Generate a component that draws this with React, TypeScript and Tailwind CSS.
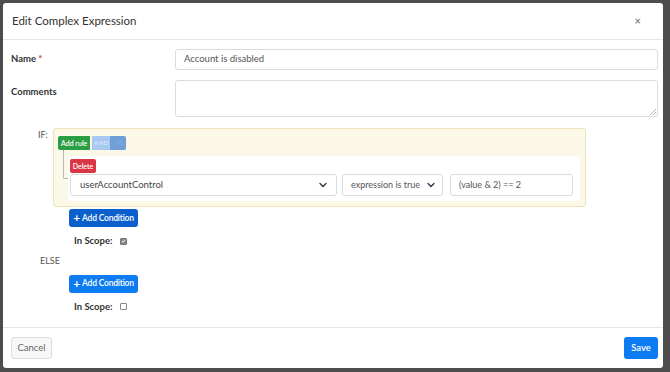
import React from "react";

function Chevron() {
  return (
    <svg width="8" height="8" viewBox="0 0 16 16" className="shrink-0">
      <path d="M2 5l6 6 6-6" fill="none" stroke="#343a40" strokeWidth="2.8" strokeLinecap="round" strokeLinejoin="round" />
    </svg>
  );
}

function AddCondition({ dark }: { dark?: boolean }) {
  return (
    <button
      className={
        "flex h-[18px] w-[69px] items-center justify-center gap-[2px] whitespace-nowrap rounded-[3px] text-[8.5px] font-semibold tracking-[-0.2px] text-white " +
        (dark ? "bg-[#0a5fcc]" : "bg-[#0d7cf2]")
      }
    >
      <span className="text-[12px] font-bold leading-none">+</span>
      <span>Add Condition</span>
    </button>
  );
}

function Scope({ checked }: { checked?: boolean }) {
  return (
    <div className="ml-[63px] flex items-center gap-[8px]">
      <span className="whitespace-nowrap text-[9.5px] font-bold text-[#333]">In Scope:</span>
      <span
        className={
          "flex h-[7px] w-[7px] items-center justify-center rounded-[1px] border " +
          (checked ? "border-[#777] bg-[#888]" : "border-[#888] bg-white")
        }
      >
        {checked && (
          <svg width="6" height="6" viewBox="0 0 8 8">
            <path d="M1.5 4l1.8 2L6.5 2" fill="none" stroke="#fff" strokeWidth="1.4" />
          </svg>
        )}
      </span>
    </div>
  );
}

export default function App() {
  return (
    <div
      className="h-[372px] w-[670px] overflow-hidden bg-[#4d4d4d] pl-[3px] pt-[3px]"
      style={{ fontFamily: "Lato, 'Noto Sans', sans-serif" }}
    >
      <div className="flex h-[365px] w-[660px] flex-col rounded-[3px] bg-white">
        {/* header */}
        <div className="flex h-[37px] shrink-0 items-center justify-between border-b border-[#e6e6e6] pl-[9px] pr-[22px]">
          <span className="text-[11.5px] text-[#333]">Edit Complex Expression</span>
          <span className="text-[11px] font-bold text-[#888]">×</span>
        </div>

        {/* body */}
        <div className="flex flex-1 flex-col pl-[8px] pr-[5px] pt-[9px]">
          <div className="flex items-center">
            <div className="w-[164px] text-[9.5px] font-bold text-[#333]">
              Name <span className="text-[#dc3545]">*</span>
            </div>
            <div className="flex h-[21px] flex-1 items-center rounded-[3px] border border-[#dcdcdc] px-[8px] text-[9.5px] text-[#555]">
              Account is disabled
            </div>
          </div>

          <div className="mt-[10px] flex items-start">
            <div className="w-[164px] pt-[5px] text-[9.5px] font-bold text-[#333]">Comments</div>
            <div className="relative h-[37px] flex-1 rounded-[3px] border border-[#dcdcdc]">
              <svg className="absolute bottom-[1px] right-[1px]" width="6" height="6" viewBox="0 0 6 6">
                <path d="M6 0L0 6M6 3L3 6" stroke="#999" strokeWidth="0.8" />
              </svg>
            </div>
          </div>

          <div className="mt-[11px] flex items-start">
            <div className="w-[42px] pl-[27px] text-[9px] text-[#555]">IF:</div>
            <div className="flex h-[79px] w-[533px] flex-col rounded-[3px] border border-[#efe2b8] bg-[#fcf8e8] pl-[4px] pr-[5px] pt-[7px]">
              <div className="flex">
                <span className="flex h-[14px] items-center whitespace-nowrap rounded-l-[2px] bg-[#2a9d45] px-[3px] text-[7px] font-semibold text-white">
                  Add rule
                </span>
                <span className="ml-[2px] flex h-[14px] w-[18px] items-center justify-center bg-[#a6c8f1] text-[6.5px] font-semibold text-[#d8e6f8]">
                  AND
                </span>
                <span className="flex h-[14px] w-[16px] items-center justify-center rounded-r-[2px] bg-[#6f9fd6] text-[6.5px] text-[#87b0e0]">
                  OR
                </span>
              </div>
              <div className="flex">
                <div className="ml-[5px] h-[29px] w-[6px] rounded-bl-[2px] border-b border-l border-[#b8b8b8]" />
                <div className="mt-[6px] flex h-[45px] flex-1 flex-col rounded-[3px] bg-white pl-[2px] pr-[7px] pt-[3px]">
                  <span className="flex h-[14px] w-[26px] items-center justify-center rounded-[2px] bg-[#dc3545] text-[7px] font-semibold text-white">
                    Delete
                  </span>
                  <div className="mt-[1px] flex gap-[5px]">
                    <div className="flex h-[22px] w-[267px] items-center justify-between rounded-[3px] border border-[#dcdcdc] px-[9px] text-[9.5px] text-[#444]">
                      userAccountControl
                      <Chevron />
                    </div>
                    <div className="flex h-[22px] w-[101px] items-center justify-between whitespace-nowrap rounded-[3px] border border-[#dcdcdc] pl-[8px] pr-[7px] text-[9px] text-[#555]">
                      expression is true
                      <Chevron />
                    </div>
                    <div className="ml-[2px] flex h-[22px] w-[123px] items-center whitespace-nowrap rounded-[3px] border border-[#dcdcdc] px-[8px] text-[9px] text-[#555]">
                      (value &amp; 2) == 2
                    </div>
                  </div>
                </div>
              </div>
            </div>
          </div>

          <div className="ml-[58px] mt-[2px]">
            <AddCondition dark />
          </div>
          <div className="mt-[7px]">
            <Scope checked />
          </div>
          <div className="mt-[6px] pl-[29px] text-[9px] text-[#555]">ELSE</div>
          <div className="ml-[58px] mt-[7px]">
            <AddCondition />
          </div>
          <div className="mt-[7px]">
            <Scope />
          </div>
        </div>

        {/* footer */}
        <div className="flex h-[41px] shrink-0 items-center justify-between border-t border-[#e6e6e6] pl-[8px] pr-[5px]">
          <button className="h-[22px] w-[41px] rounded-[3px] border border-[#dedede] bg-[#f7f7f7] text-[9.5px] text-[#666]">
            Cancel
          </button>
          <button className="h-[22px] w-[34px] rounded-[3px] bg-[#0d7cf2] text-[9.5px] font-semibold text-white">
            Save
          </button>
        </div>
      </div>
    </div>
  );
}
